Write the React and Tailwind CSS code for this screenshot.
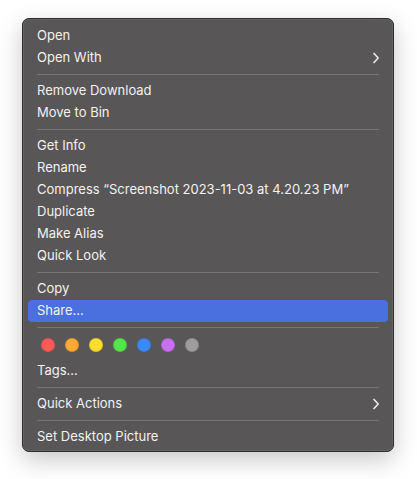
import React from 'react';

const Chevron = () => (
  <svg width="8" height="12" viewBox="0 0 8 12" className="text-[#e8e8e8]">
    <path d="M2 1.5 L6.2 6 L2 10.5" fill="none" stroke="currentColor" strokeWidth="1.7" strokeLinecap="round" strokeLinejoin="round" />
  </svg>
);

const Item = ({ label, sub, active }) => (
  <div className={`h-[22px] mx-[5px] pl-[9px] pr-[8px] flex items-center justify-between rounded-[4px] ${active ? 'bg-[#4a6fdf]' : ''}`}>
    <span>{label}</span>
    {sub && <Chevron />}
  </div>
);

const Sep = () => (
  <div className="h-[11px] flex items-center px-[14px]">
    <div className="h-px w-full bg-[#767474]" />
  </div>
);

const tagColors = ['#fe5a55', '#fca831', '#fddd2c', '#56e44b', '#3a8bf9', '#c76ef1', '#9d9c9f'];

export default function App() {
  return (
    <div className="w-[417px] h-[479px] bg-white pt-[18px] pl-[22px]">
      <div
        className="w-[372px] h-[434px] bg-[#585656] rounded-[7px] border border-[#2e2d2d] pt-[6px] text-[13px] text-[#f2f2f2] shadow-[0_0_0_1px_rgba(255,255,255,0.08)_inset,0_8px_24px_rgba(0,0,0,0.22)]"
        style={{ fontFamily: 'Inter, "Noto Sans", sans-serif' }}
      >
        <Item label="Open" />
        <Item label="Open With" sub />
        <Sep />
        <Item label="Remove Download" />
        <Item label="Move to Bin" />
        <Sep />
        <Item label="Get Info" />
        <Item label="Rename" />
        <Item label="Compress “Screenshot 2023-11-03 at 4.20.23 PM”" />
        <Item label="Duplicate" />
        <Item label="Make Alias" />
        <Item label="Quick Look" />
        <Sep />
        <Item label="Copy" />
        <Item label="Share…" active />
        <Sep />
        <div className="h-[27px] flex items-start pt-[5px] pl-[18px] gap-[10px]">
          {tagColors.map(c => (
            <div key={c} className="w-[14px] h-[14px] rounded-full border border-black/10" style={{ backgroundColor: c }} />
          ))}
        </div>
        <Item label="Tags…" />
        <Sep />
        <Item label="Quick Actions" sub />
        <Sep />
        <Item label="Set Desktop Picture" />
      </div>
    </div>
  );
}
